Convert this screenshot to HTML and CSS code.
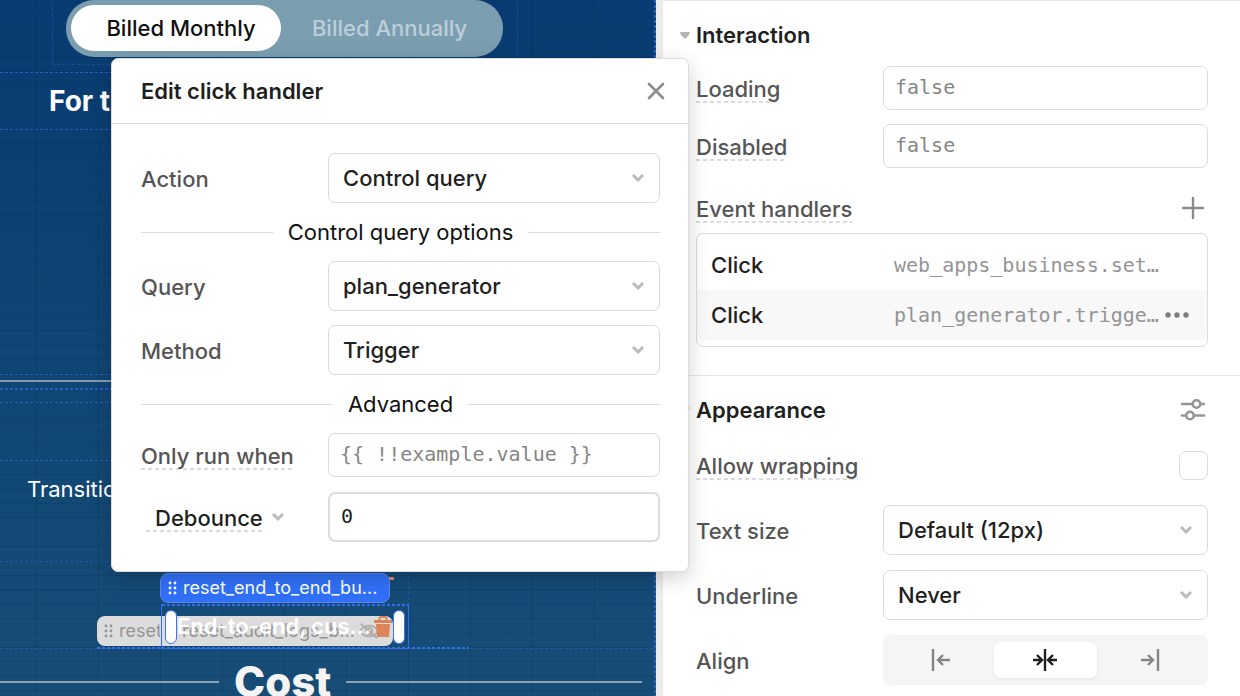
FILE: index.html
```html
<!DOCTYPE html>
<html lang="en">
<head>
<meta charset="utf-8">
<title>App editor</title>
<link rel="stylesheet" href="styles.css">
</head>
<body>
<div class="editor">
  <main class="canvas">
    <i class="guide-box"></i>
    <i class="guide-row g1"></i>
    <i class="guide-row g2"></i>
    <i class="guide-row g3"></i>
    <i class="rule"></i>
    <i class="guide-row g4"></i>
    <i class="guide-row g5"></i>
    <i class="guide-row g6"></i>
    <i class="guide-row g7"></i>
    <i class="guide-row g8"></i>
    <i class="guide-col"></i>
    <i class="guide-stub"></i>
    <i class="guide-drop"></i>

    <div class="billing" role="group" aria-label="Billing period">
      <button class="billing-option is-on" type="button">Billed Monthly</button>
      <button class="billing-option" type="button">Billed Annually</button>
    </div>
    <h2 class="canvas-title">For t</h2>
    <p class="canvas-text">Transitio</p>

    <div class="node tag tag-muted tag-back">
      <svg class="grip" viewBox="0 0 9 14"><g fill="currentColor"><circle cx="2" cy="2" r="1.4"/><circle cx="7" cy="2" r="1.4"/><circle cx="2" cy="7" r="1.4"/><circle cx="7" cy="7" r="1.4"/><circle cx="2" cy="12" r="1.4"/><circle cx="7" cy="12" r="1.4"/></g></svg>
      <span>reset</span>
    </div>
    <div class="node tag tag-muted tag-front">
      <span>reset_audit_logs_b...</span>
      <svg class="eye" viewBox="0 0 22 18" fill="none" stroke="currentColor" stroke-width="2"><path d="M1 9C6 1 16 1 21 9C16 17 6 17 1 9Z"/><circle cx="11" cy="9" r="3.5"/><path d="M2 1L20 17"/></svg>
    </div>
    <div class="node selection"><span class="selection-text">End-to-end, cus...</span></div>
    <svg class="node trash" viewBox="0 0 20 22"><path d="M6.500 4V2.500Q6.500 1 8 1H12Q13.500 1 13.500 2.500V4" fill="none" stroke="#dd8558" stroke-width="2"/><path d="M1 4H19V7H1ZM3 8H17L16 21H4Z" fill="#dd8558"/></svg>
    <i class="node handle handle-left"></i>
    <i class="node handle handle-right"></i>
    <i class="node trash-edge"></i>
    <div class="node tag tag-active">
      <svg class="grip" viewBox="0 0 9 14"><g fill="currentColor"><circle cx="2" cy="2" r="1.4"/><circle cx="7" cy="2" r="1.4"/><circle cx="2" cy="7" r="1.4"/><circle cx="7" cy="7" r="1.4"/><circle cx="2" cy="12" r="1.4"/><circle cx="7" cy="12" r="1.4"/></g></svg>
      <span>reset_end_to_end_bu...</span>
    </div>
    <div class="node cost"><h2>Cost</h2></div>
  </main>

  <aside class="panel">
    <section class="section">
      <h3 class="section-title"><svg class="caret" viewBox="0 0 10 7"><path d="M1 0H9Q10.500 .5 9.500 2L6 6.300Q5 7 4 6.300L.5 2Q-.5 .5 1 0Z" fill="#b5b5b5"/></svg>Interaction</h3>
      <div class="fields">
        <div class="row"><label class="hint" for="loading">Loading</label><input class="box code" id="loading" placeholder="false"></div>
        <div class="row"><label class="hint" for="disabled">Disabled</label><input class="box code" id="disabled" placeholder="false"></div>
      </div>
      <div class="handlers-head">
        <span class="hint">Event handlers</span>
        <button class="icon-button" type="button" aria-label="Add event handler"><svg width="24" height="24" viewBox="0 0 24 24" stroke="#8c8c8c" stroke-width="2.400" stroke-linecap="round"><path d="M12 2V22M2 12H22"/></svg></button>
      </div>
      <ul class="handlers">
        <li><span class="event">Click</span><span class="target">web_apps_business.set…</span></li>
        <li class="is-current"><span class="event">Click</span><span class="target">plan_generator.trigge…</span><button class="icon-button" type="button" aria-label="More"><svg width="26" height="8" viewBox="0 0 26 8" fill="#7d7d7d"><circle cx="4" cy="4" r="2.700"/><circle cx="13" cy="4" r="2.700"/><circle cx="22" cy="4" r="2.700"/></svg></button></li>
      </ul>
    </section>
    <section class="section">
      <h3 class="section-title"><svg class="caret" viewBox="0 0 10 7"><path d="M1 0H9Q10.500 .5 9.500 2L6 6.300Q5 7 4 6.300L.5 2Q-.5 .5 1 0Z" fill="#b5b5b5"/></svg>Appearance
        <button class="icon-button push" type="button" aria-label="Style settings"><svg width="26" height="26" viewBox="0 0 26 26" fill="none" stroke="#969696" stroke-width="2.600" stroke-linecap="round"><path d="M2 7H12.500M20.500 7H24M2 18.500H6M14 18.500H24"/><circle cx="16.500" cy="7" r="3.800"/><circle cx="10" cy="18.500" r="3.800"/></svg></button>
      </h3>
      <div class="check-row"><label class="hint" for="wrap">Allow wrapping</label><input class="check" type="checkbox" id="wrap"></div>
      <div class="fields loose">
        <div class="row"><label for="size">Text size</label><div class="pick"><select class="box" id="size"><option>Default (12px)</option></select><svg class="chevron" viewBox="0 0 14 10"><path d="M2 2L7 7L12 2"/></svg></div></div>
        <div class="row"><label for="under">Underline</label><div class="pick"><select class="box" id="under"><option>Never</option></select><svg class="chevron" viewBox="0 0 14 10"><path d="M2 2L7 7L12 2"/></svg></div></div>
        <div class="row"><span>Align</span>
          <div class="segments" role="group" aria-label="Align">
            <button type="button" aria-label="Left"><svg width="24" height="24" viewBox="0 0 24 24"><path d="M4 1V23M21 12H9M14 7L9 12L14 17"/></svg></button>
            <button class="is-on" type="button" aria-label="Center"><svg width="28" height="24" viewBox="0 0 28 24"><path d="M14 1V23M2 12H10.500M6 7L11 12L6 17M26 12H17.500M22 7L17 12L22 17"/></svg></button>
            <button type="button" aria-label="Right"><svg width="24" height="24" viewBox="0 0 24 24"><path d="M20 1V23M3 12H15M10 7L15 12L10 17"/></svg></button>
          </div>
        </div>
      </div>
    </section>
  </aside>

  <div class="modal" role="dialog" aria-labelledby="dialog-title">
    <header class="modal-head">
      <h1 id="dialog-title">Edit click handler</h1>
      <button class="icon-button" type="button" aria-label="Close"><svg width="20" height="20" viewBox="0 0 20 20" stroke="#8c8c8c" stroke-width="2.600" stroke-linecap="round"><path d="M3 3L17 17M17 3L3 17"/></svg></button>
    </header>
    <form class="modal-body">
      <div class="row"><label for="action">Action</label><div class="pick"><select class="box" id="action"><option>Control query</option></select><svg class="chevron" viewBox="0 0 14 10"><path d="M2 2L7 7L12 2"/></svg></div></div>
      <div class="divider">Control query options</div>
      <div class="fields">
        <div class="row"><label for="query">Query</label><div class="pick"><select class="box" id="query"><option>plan_generator</option></select><svg class="chevron" viewBox="0 0 14 10"><path d="M2 2L7 7L12 2"/></svg></div></div>
        <div class="row"><label for="method">Method</label><div class="pick"><select class="box" id="method"><option>Trigger</option></select><svg class="chevron" viewBox="0 0 14 10"><path d="M2 2L7 7L12 2"/></svg></div></div>
      </div>
      <div class="divider">Advanced</div>
      <div class="fields loose">
        <div class="row"><label class="hint" for="only">Only run when</label><input class="box code" id="only" placeholder="{{ !!example.value }}"></div>
        <div class="row"><div class="timing"><label class="hint" for="delay">Debounce</label><svg class="chevron" viewBox="0 0 14 10"><path d="M2 2L7 7L12 2"/></svg></div><input class="box code strong" id="delay" value="0"></div>
      </div>
    </form>
  </div>
</div>
</body>
</html>
```
FILE: styles.css
```css
* { box-sizing: border-box; }

body {
  margin: 0;
  background: #fff;
  color: #1f1f1f;
  font: 500 22px/28px Inter, "Liberation Sans", sans-serif;
  overflow: hidden;
}

h1, h2, h3, p, ul { margin: 0; padding: 0; }
ul { list-style: none; }
button { border: 0; background: none; padding: 0; font: inherit; color: inherit; }
svg { display: block; }

.editor {
  display: grid;
  grid-template-columns: minmax(0, 1fr) 584px;
  min-height: 100vh;
  position: relative;
}

/* Canvas */
.canvas {
  position: relative;
  overflow: hidden;
  background:
    repeating-linear-gradient(180deg, transparent 0 13px, rgba(4, 32, 62, .16) 13px 14px, transparent 14px 28px, rgba(4, 32, 62, .16) 28px 29px, transparent 29px 42px, rgba(4, 32, 62, .16) 42px 43px, transparent 43px 57px, rgba(4, 32, 62, .16) 57px 58px, transparent 58px 71px, rgba(4, 32, 62, .16) 71px 72px),
    repeating-linear-gradient(90deg, transparent 0 36px, rgba(4, 32, 62, .16) 36px 37px, transparent 37px 62px),
    linear-gradient(180deg, #083b71, #114775 60%, #184d76);
}

.guide-row {
  position: absolute;
  left: 0;
  right: 0;
  height: 1px;
  background: repeating-linear-gradient(90deg, #2a5cbf 0 3px, transparent 3px 5px);
}
.g1 { top: 72px; }
.g2 { top: 129px; }
.g3 { top: 374px; }
.g4 { top: 388px; height: 2px; }
.g5 { top: 402px; }
.g6 { top: 460px; }
.g7 { top: 561px; opacity: .7; }
.g8 { top: 648px; opacity: .7; }
.guide-box { position: absolute; left: 52px; top: -2px; width: 466px; height: 67px; border: 1px dashed #2454ab; opacity: .7; }
.guide-stub { position: absolute; left: 408px; top: 560px; height: 45px; border-left: 1px dashed #2454ab; }
.guide-col { position: absolute; top: 0; bottom: 0; right: 0; width: 2px; background: repeating-linear-gradient(180deg, #2464d0 0 3px, transparent 3px 5px); }
.guide-drop { position: absolute; left: 97px; top: 647px; width: 372px; height: 2px; background: repeating-linear-gradient(90deg, #2f6ff0 0 3px, transparent 3px 5px); }
.rule { position: absolute; left: 0; right: 0; top: 380px; height: 2px; background: #8899b0; }

.billing {
  position: absolute;
  left: 66px;
  top: 0;
  width: 437px;
  height: 57px;
  padding: 5px;
  display: grid;
  grid-template-columns: 210px 1fr;
  border-radius: 28px;
  background: #7b9db0;
}
.billing-option { height: 46px; border-radius: 23px; color: #bccfd9; }
.billing-option.is-on { padding-left: 10px; background: #fff; color: #111; }

.canvas-title { position: absolute; left: 49px; top: 84px; color: #fff; font-size: 28px; line-height: 34px; font-weight: 700; }
.canvas-text { position: absolute; left: 27px; top: 475px; color: #fff; font-weight: 400; }

.node { position: absolute; }
.tag {
  display: flex;
  align-items: center;
  gap: 6px;
  height: 30px;
  padding: 0 7px;
  border-radius: 8px;
  font-size: 18px;
  font-weight: 400;
  white-space: nowrap;
}
.grip { width: 9px; height: 14px; flex: none; }
.tag-muted { background: #dcdcdc; color: #959595; }
.tag-back { left: 97px; top: 616px; width: 80px; }
.tag-front { left: 160px; top: 616px; width: 233px; padding-left: 22px; gap: 4px; border-radius: 0 8px 8px 0; }
.tag-active { left: 160px; top: 573px; width: 230px; border: 1px solid #5c86e8; background: #3070f8; color: #fff; }
.eye { width: 20px; height: 18px; color: #adadad; flex: none; }
.selection {
  left: 161px;
  top: 604px;
  width: 248px;
  height: 45px;
  padding: 8px 15px;
  border: 1px solid #2f6ff0;
  border-top: 0;
  background: repeating-linear-gradient(90deg, #2f6ff0 0 3px, transparent 3px 5px) left top / 100% 2px no-repeat;
}
.selection-text { color: #fff; font-weight: 600; white-space: nowrap; }
.trash { left: 373px; top: 616px; width: 20px; height: 22px; }
.trash-edge { left: 388px; top: 577px; width: 6px; height: 3px; background: #dd8558; }
.handle { top: 610px; width: 12px; height: 34px; border: 1px solid #3b74ee; border-radius: 6px; background: #fff; }
.handle-left { left: 165px; }
.handle-right { left: 393px; }

.cost { left: 0; right: 14px; top: 657px; display: flex; align-items: center; gap: 15px; color: #f4f4f4; }
.cost::before { content: ""; width: 219px; height: 2px; background: #8ea2b5; }
.cost::after { content: ""; flex: 1; height: 2px; background: #8ea2b5; }
.cost h2 { font-size: 42px; line-height: 50px; font-weight: 800; }

/* Inspector */
.panel { border-left: 7px solid #ececec; background: #fff; }
.section { padding: 20px 32px 28px 33px; border-top: 1px solid #e6e6e6; }
.section-title { display: flex; align-items: center; height: 28px; margin-left: -16px; font-size: 22px; font-weight: 600; }
.caret { width: 10px; height: 7px; margin-right: 6px; }
.push { margin-left: auto; margin-right: 2px; }
.icon-button { display: flex; align-items: center; justify-content: center; }
.section > .fields { margin-top: 17px; }
.fields { display: grid; gap: 14px; }
.fields.loose { gap: 15px; }

.row { display: grid; grid-template-columns: 187px minmax(0, 1fr); align-items: center; color: #555; }
.row > label, .row > span { justify-self: start; padding-top: 2px; }
.hint, .row > .hint {
  color: #555;
  line-height: 26px;
  padding: 2px 0 1px;
  background: repeating-linear-gradient(90deg, #dcdcdc 0 4px, transparent 4px 7px) left bottom / 100% 2px no-repeat;
}
.box {
  width: 100%;
  height: 50px;
  margin: 0;
  padding: 0 14px;
  border: 1px solid #dcdcdc;
  border-radius: 7px;
  background: #fff;
  color: #1f1f1f;
  font: inherit;
  appearance: none;
  outline: 0;
}
.code { height: 44px; padding: 0 11px 2px; font: 400 20px/28px "DejaVu Sans Mono", monospace; }
.code::placeholder { color: #858585; opacity: 1; }
.code.strong { height: 50px; border-width: 2px; }

.pick { display: grid; align-items: center; }
.pick > * { grid-area: 1 / 1; }
.chevron { width: 14px; height: 10px; fill: none; stroke: #bbb; stroke-width: 3; }
.pick .chevron { justify-self: end; margin-right: 15px; pointer-events: none; }

.handlers-head { display: flex; justify-content: space-between; align-items: center; height: 32px; margin-top: 24px; padding-right: 3px; }
.handlers { margin-top: 9px; padding: 6px 0; border: 1px solid #dcdcdc; border-radius: 7px; }
.handlers li { display: flex; align-items: center; height: 50px; padding: 0 17px 0 14px; }
.handlers .is-current { background: #f8f8f8; border-radius: 0 0 7px 7px; }
.event { width: 183px; }
.target { flex: 1; color: #949494; font: 400 20px/28px "DejaVu Sans Mono", monospace; white-space: nowrap; }

.check-row { display: flex; justify-content: space-between; align-items: center; margin: 27px 0 25px; }
.section > .check-row + .fields { margin-top: 0; }
.check { appearance: none; width: 29px; height: 29px; margin: 0; border: 1px solid #dcdcdc; border-radius: 7px; background: #fff; }

.segments { display: grid; grid-template-columns: repeat(3, 1fr); gap: 2px; height: 50px; padding: 7px; border-radius: 7px; background: #f5f5f5; }
.segments button { display: flex; align-items: center; justify-content: center; border-radius: 7px; }
.segments svg { fill: none; stroke: #858585; stroke-width: 2.400; }
.segments .is-on { background: #fff; box-shadow: 0 1px 3px rgba(0, 0, 0, .08); }
.segments .is-on svg { stroke: #1f1f1f; }

/* Dialog */
.modal {
  position: absolute;
  left: 111px;
  top: 58px;
  width: 578px;
  border: 1px solid #dcdcdc;
  border-radius: 7px;
  background: #fff;
  box-shadow: 0 6px 20px rgba(0, 0, 0, .18);
}
.modal-head { display: flex; align-items: center; justify-content: space-between; height: 65px; padding: 0 22px 0 29px; border-bottom: 1px solid #dcdcdc; }
.modal-head h1 { font-size: 22px; line-height: 28px; font-weight: 600; }
.modal-body { padding: 29px 28px 29px 29px; }
.divider { display: flex; align-items: center; gap: 15px; height: 58px; color: #111; font-weight: 400; }
.divider::before, .divider::after { content: ""; flex: 1; height: 1px; background: #dcdcdc; }
.timing { display: flex; align-items: center; gap: 8px; padding-left: 5px; }
.timing .hint { padding-left: 9px; color: #1f1f1f; }
```
